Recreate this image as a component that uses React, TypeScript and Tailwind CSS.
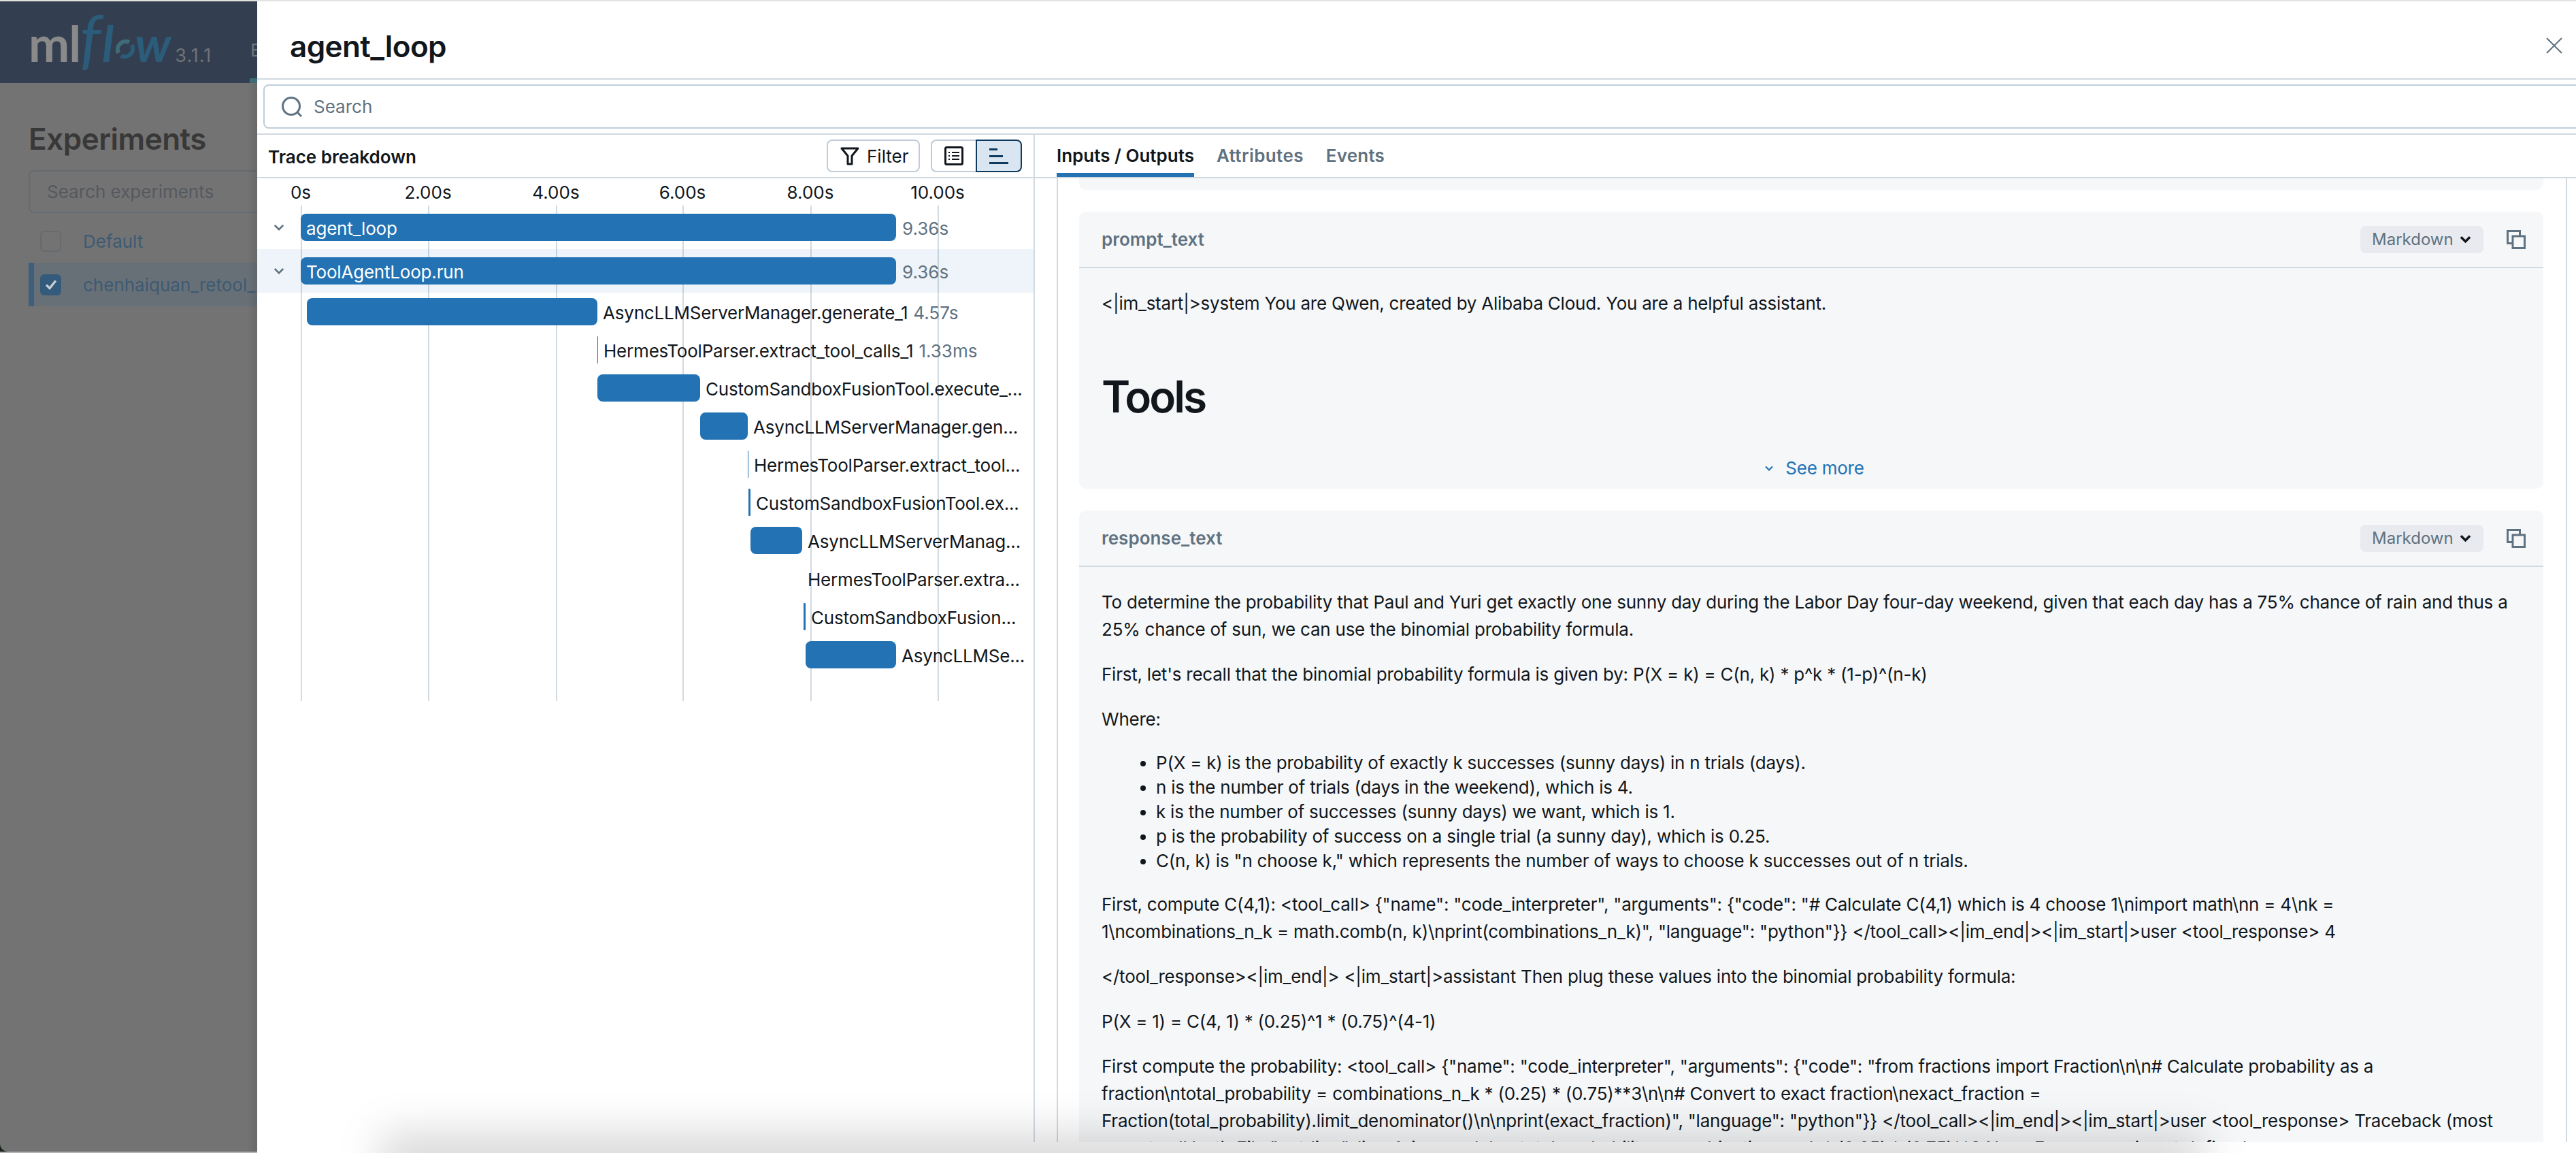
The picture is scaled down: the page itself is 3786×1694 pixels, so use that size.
import React from "react";

const inter = "font-['Inter','Liberation_Sans',sans-serif]";

type Row = { bar: number; w: number; name: string; dur?: string; inside?: boolean; tall?: boolean; chev?: boolean; hi?: boolean };

const ORIGIN = 378;
const rows: Row[] = [
  { bar: 442, w: 875, name: "agent_loop", dur: "9.36s", inside: true, tall: true, chev: true },
  { bar: 442, w: 875, name: "ToolAgentLoop.run", dur: "9.36s", inside: true, tall: true, chev: true, hi: true },
  { bar: 451, w: 427, name: "AsyncLLMServerManager.generate_1", dur: "4.57s" },
  { bar: 878, w: 1, name: "HermesToolParser.extract_tool_calls_1", dur: "1.33ms" },
  { bar: 878, w: 151, name: "CustomSandboxFusionTool.execute_..." },
  { bar: 1029, w: 70, name: "AsyncLLMServerManager.gen..." },
  { bar: 1099, w: 1, name: "HermesToolParser.extract_tool..." },
  { bar: 1100, w: 3, name: "CustomSandboxFusionTool.ex..." },
  { bar: 1103, w: 76, name: "AsyncLLMServerManag..." },
  { bar: 1179, w: 0, name: "HermesToolParser.extra..." },
  { bar: 1181, w: 3, name: "CustomSandboxFusion..." },
  { bar: 1184, w: 133, name: "AsyncLLMSe..." },
];

const ticks = [
  { x: 442, t: "0s" },
  { x: 629, t: "2.00s" },
  { x: 817, t: "4.00s" },
  { x: 1003, t: "6.00s" },
  { x: 1191, t: "8.00s" },
  { x: 1378, t: "10.00s" },
];

function Chevron({ className, sw = 2.2 }: { className?: string; sw?: number }) {
  return (
    <svg viewBox="0 0 16 16" className={className} fill="none" stroke="currentColor" strokeWidth={sw}>
      <path d="M3 5.5 8 10.5 13 5.5" />
    </svg>
  );
}

function Copy() {
  return (
    <svg viewBox="0 0 28 28" className="w-[28px] h-[28px] text-[#5f7281]" fill="none" stroke="currentColor" strokeWidth="3">
      <path d="M9 19.5H1.5V1.5H19.5V9" />
      <rect x="9" y="9" width="17.5" height="17.5" />
    </svg>
  );
}

function CardHeader({ label }: { label: string }) {
  return (
    <div className="h-[83px] border-b-2 border-[#d1d9e1] flex items-center pl-[33px] pr-[26px]">
      <span className="text-[#5f7281] text-[26px] font-semibold flex-1">{label}</span>
      <span className="h-[40px] w-[181px] bg-[#e8eaef] rounded-[8px] flex items-center pl-[17px] gap-[7px] text-[#5f7281] text-[24px]">
        Markdown
        <Chevron className="w-[21px] h-[21px] text-[#11171c]" sw={2.6} />
      </span>
      <span className="ml-[34px] flex"><Copy /></span>
    </div>
  );
}

function Lines({ lines }: { lines: string[] }) {
  return (
    <p className="mb-[26px] whitespace-nowrap">
      {lines.map((l, i) => (
        <React.Fragment key={i}>
          {l}
          {i < lines.length - 1 && <br />}
        </React.Fragment>
      ))}
    </p>
  );
}

function Logo() {
  return (
    <div className="flex items-baseline pl-[42px] pt-[4px] h-[120px] leading-none font-['Lato',sans-serif] whitespace-nowrap">
      <span className="text-[#8a8a8a] text-[72px] font-bold tracking-[-1px]">ml</span>
      <span className="text-[#2b5d7b] text-[96px] italic -ml-[1px] tracking-[-6px]">f</span>
      <span className="text-[#2b5d7b] text-[72px] italic font-bold ml-[8px]">l</span>
      <svg viewBox="0 0 30 30" className="w-[30px] h-[30px] ml-[2px] self-end mb-[35px]" fill="none" strokeWidth="6">
        <path d="M5 21A12 12 0 0 1 21 5" stroke="#3f6a78" />
        <path d="M25 9A12 12 0 0 1 9 25" stroke="#2b5d7b" />
      </svg>
      <span className="text-[#2b5d7b] text-[72px] italic font-bold -ml-[1px]">w</span>
      <span className={`${inter} text-[#6f7377] text-[27px] tracking-[1px] ml-[6px]`}>3.1.1</span>
    </div>
  );
}

function BehindPage() {
  return (
    <div className="w-[378px] shrink-0 bg-[#1c241c]">
      <div className="h-full bg-[#737373] rounded-bl-[12px] overflow-hidden relative flex flex-col">
        <div className="h-[120px] shrink-0 bg-[#333f50] relative">
          <Logo />
          <span className={`${inter} absolute left-[368px] top-[52px] text-[#6f7377] text-[26px]`}>E</span>
          <span className="absolute left-[367px] bottom-0 w-[11px] h-[7px] bg-[#3f6a78]" />
        </div>
        <div className={`${inter} pl-[42px] pt-[60px]`}>
          <div className="text-[#383838] text-[44px] font-semibold leading-[44px] tracking-[-0.5px]">Experiments</div>
          <div className="mt-[24px] w-[400px] h-[63px] border-2 border-[#666b70] rounded-[8px] flex items-center pl-[25px] text-[#55595e] text-[26px] whitespace-nowrap">
            Search experiments
          </div>
          <div className="mt-[17px] h-[48px] flex items-center whitespace-nowrap">
            <span className="ml-[17px] w-[31px] h-[31px] rounded-[6px] border-2 border-[#666b70]" />
            <span className="ml-[32px] text-[#3d5a73] text-[26px]">Default</span>
          </div>
          <div className="mt-[8px] h-[64px] w-[400px] bg-[#687077] border-l-[8px] border-[#3e5f7e] flex items-center whitespace-nowrap">
            <span className="ml-[9px] w-[31px] h-[31px] rounded-[6px] bg-[#345b7c] flex items-center justify-center">
              <svg viewBox="0 0 16 16" className="w-[22px] h-[22px]" fill="none" stroke="#c9d0d6" strokeWidth="2.4">
                <path d="M3 8.5 6.5 12 13 4" />
              </svg>
            </span>
            <span className="ml-[32px] text-[#3d5a73] text-[26px]">chenhaiquan_retool_</span>
          </div>
        </div>
        <div className="absolute top-[120px] bottom-0 right-0 w-[14px] bg-gradient-to-r from-transparent to-black/10" />
      </div>
    </div>
  );
}

function Timeline() {
  return (
    <div className="relative h-[768px]">
      <div className="relative h-[40px]">
        {ticks.map((t) => (
          <span key={t.t} className="absolute top-[1px] text-[26px] leading-[40px] text-[#11171c] -translate-x-1/2 whitespace-nowrap" style={{ left: t.x - ORIGIN }}>
            {t.t}
          </span>
        ))}
      </div>
      {ticks.map((t) => (
        <span key={t.x} className="absolute top-[40px] bottom-0 w-[2px] bg-[#d1d9e1]" style={{ left: t.x - ORIGIN }} />
      ))}
      <div className="relative">
        {rows.map((r, i) => (
          <div key={i} className={`relative flex items-center ${r.tall ? "h-[64px]" : "h-[56px]"} ${r.hi ? "bg-[#2272b4]/[0.08]" : ""}`}>
            {r.chev && (
              <span className="absolute left-[22px] text-[#5f7281] flex">
                <Chevron className="w-[20px] h-[20px]" />
              </span>
            )}
            <div
              className={`shrink-0 h-[40px] bg-[#2272b4] ${r.w > 4 ? "rounded-[8px]" : "rounded-[1px]"} flex items-center`}
              style={{ marginLeft: r.bar - ORIGIN, width: r.w }}
            >
              {r.inside && <span className="ml-[8px] mt-[3px] text-white text-[26px] tracking-[-0.2px] whitespace-nowrap">{r.name}</span>}
            </div>
            {!r.inside && <span className="ml-[8px] mt-[3px] text-[26px] tracking-[-0.2px] text-[#11171c] whitespace-nowrap">{r.name}</span>}
            {r.dur && <span className={`${r.inside ? "ml-[9px]" : "ml-[8px]"} mt-[3px] text-[26px] text-[#5f7281] whitespace-nowrap`}>{r.dur}</span>}
          </div>
        ))}
      </div>
    </div>
  );
}

function LeftPane() {
  return (
    <div className="w-[1143px] shrink-0 border-r-2 border-[#d1d9e1]">
      <div className="h-[64px] border-b-2 border-[#d1d9e1] flex items-center pl-[16px] pr-[17px]">
        <span className="flex-1 text-[26px] font-semibold text-[#11171c] pt-[3px]">Trace breakdown</span>
        <button className="h-[48px] w-[137px] border-2 border-[#c0cdd8] rounded-[8px] flex items-center pl-[18px] gap-[11px] text-[26px] text-[#11171c]">
          <svg viewBox="0 0 28 28" className="w-[28px] h-[28px]" fill="none" stroke="#11171c" strokeWidth="3" strokeLinejoin="round">
            <path d="M2 3H26L17 14V26H11V14Z" />
          </svg>
          Filter
        </button>
        <div className="ml-[16px] flex h-[48px]">
          <span className="w-[66px] border-2 border-r-0 border-[#c0cdd8] rounded-l-[8px] flex items-center justify-center">
            <svg viewBox="0 0 28 28" className="w-[28px] h-[28px]">
              <rect x="1.5" y="1.5" width="25" height="25" rx="2" fill="none" stroke="#11171c" strokeWidth="3" />
              <path d="M6 8h2v2H6zM6 13h2v2H6zM6 18h2v2H6z" fill="#11171c" />
              <path d="M11 8h11v2H11zM11 13h11v2H11zM11 18h11v2H11z" fill="#11171c" />
            </svg>
          </span>
          <span className="w-[68px] border-2 border-[#0e3a5f] bg-[#d9e5f0] rounded-r-[8px] flex items-center justify-center">
            <svg viewBox="0 0 28 28" className="w-[28px] h-[28px]" fill="#0e3a5f">
              <rect x="0" y="3" width="12" height="3" />
              <rect x="0" y="13" width="20" height="3" />
              <rect x="0" y="23" width="28" height="3" />
            </svg>
          </span>
        </div>
      </div>
      <Timeline />
    </div>
  );
}

function RightPane() {
  return (
    <div className="flex-1 min-w-0 flex flex-col">
      <div className="h-[64px] shrink-0 border-b-2 border-[#d1d9e1] flex pl-[32px] gap-[33px] text-[26px] font-semibold text-[#5f7281]">
        <span className="h-[62px] border-b-[6px] border-[#2272b4] text-[#11171c] pt-[14px] leading-[34px]">Inputs / Outputs</span>
        <span className="pt-[14px] leading-[34px] tracking-[0.4px]">Attributes</span>
        <span className="pt-[14px] leading-[34px] tracking-[0.2px]">Events</span>
      </div>
      <div className="flex-1 min-h-0 overflow-hidden ml-[32px] mr-[13px] border-x-2 border-[#d1d9e1] pl-[31px] pr-[33px]">
        <div className="h-[17px] bg-[#f6f7f9] rounded-b-[10px]" />
        <div className="mt-[32px] h-[407px] bg-[#f6f7f9] rounded-[10px] overflow-hidden">
          <CardHeader label="prompt_text" />
          <div className="px-[33px] pt-[32px] text-[26px] leading-[40px] tracking-[-0.23px] text-[#11171c]">
            <p className="whitespace-nowrap">{"<|im_start|>system You are Qwen, created by Alibaba Cloud. You are a helpful assistant."}</p>
            <h1 className="mt-[78px] text-[64px] leading-[78px] font-semibold tracking-[-3px]">Tools</h1>
            <div className="mt-[46px] ml-[8px] flex items-center justify-center gap-[16px] text-[#2272b4]">
              <Chevron className="w-[16px] h-[16px]" />
              <span>See more</span>
            </div>
          </div>
        </div>
        <div className="mt-[32px] bg-[#f6f7f9] rounded-t-[10px] h-[1000px]">
          <CardHeader label="response_text" />
          <div className="px-[33px] pt-[32px] text-[26px] leading-[40px] tracking-[-0.23px] text-[#11171c]">
            <Lines lines={[
              "To determine the probability that Paul and Yuri get exactly one sunny day during the Labor Day four-day weekend, given that each day has a 75% chance of rain and thus a",
              "25% chance of sun, we can use the binomial probability formula.",
            ]} />
            <Lines lines={["First, let's recall that the binomial probability formula is given by: P(X = k) = C(n, k) * p^k * (1-p)^(n-k)"]} />
            <Lines lines={["Where:"]} />
            <ul className="list-disc pl-[80px] mb-[26px] leading-[36px] whitespace-nowrap">
              <li>P(X = k) is the probability of exactly k successes (sunny days) in n trials (days).</li>
              <li>n is the number of trials (days in the weekend), which is 4.</li>
              <li>k is the number of successes (sunny days) we want, which is 1.</li>
              <li>p is the probability of success on a single trial (a sunny day), which is 0.25.</li>
              <li>{'C(n, k) is "n choose k," which represents the number of ways to choose k successes out of n trials.'}</li>
            </ul>
            <Lines lines={[
              'First, compute C(4,1): <tool_call> {"name": "code_interpreter", "arguments": {"code": "# Calculate C(4,1) which is 4 choose 1\\nimport math\\nn = 4\\nk =',
              '1\\ncombinations_n_k = math.comb(n, k)\\nprint(combinations_n_k)", "language": "python"}} </tool_call><|im_end|><|im_start|>user <tool_response> 4',
            ]} />
            <Lines lines={["</tool_response><|im_end|> <|im_start|>assistant Then plug these values into the binomial probability formula:"]} />
            <Lines lines={["P(X = 1) = C(4, 1) * (0.25)^1 * (0.75)^(4-1)"]} />
            <Lines lines={[
              'First compute the probability: <tool_call> {"name": "code_interpreter", "arguments": {"code": "from fractions import Fraction\\n\\n# Calculate probability as a',
              'fraction\\ntotal_probability = combinations_n_k * (0.25) * (0.75)**3\\n\\n# Convert to exact fraction\\nexact_fraction =',
              'Fraction(total_probability).limit_denominator()\\n\\nprint(exact_fraction)", "language": "python"}} </tool_call><|im_end|><|im_start|>user <tool_response> Traceback (most',
              'recent call last): File "<stdin>", line 4, in <module> total_probability = combinations_n_k * (0.25) * (0.75)**3 NameError: name is not defined',
            ]} />
          </div>
        </div>
      </div>
    </div>
  );
}

function Drawer() {
  return (
    <div className={`${inter} flex-1 min-w-0 bg-white overflow-hidden relative flex flex-col`}>
      <div className="h-[1676px] flex flex-col shrink-0">
        <div className="h-[113px] shrink-0 flex items-center pl-[48px] pr-[20px]">
          <span className="flex-1 text-[44px] font-semibold tracking-[-0.6px] text-[#11171c] pt-[19px] leading-[56px]">agent_loop</span>
          <svg viewBox="0 0 24 24" className="w-[24px] h-[24px] mt-[16px]" fill="none" stroke="#5f7281" strokeWidth="2">
            <path d="M1 1 23 23M23 1 1 23" />
          </svg>
        </div>
        <div className="h-[2px] shrink-0 bg-[#d1d9e1]" />
        <div className="h-[79px] shrink-0 pt-[7px] pl-[9px]">
          <div className="w-[3500px] h-[65px] border-2 border-[#c0cdd8] rounded-[8px] flex items-center pl-[25px] gap-[17px] text-[26px] text-[#5f7281]">
            <svg viewBox="0 0 30 30" className="w-[30px] h-[30px]" fill="none" stroke="#5f7281" strokeWidth="3">
              <circle cx="14" cy="14" r="12.5" />
              <path d="M23 23 29 29" />
            </svg>
            Search
          </div>
        </div>
        <div className="h-[2px] shrink-0 bg-[#d1d9e1]" />
        <div className="flex-1 min-h-0 flex">
          <LeftPane />
          <RightPane />
        </div>
      </div>
    </div>
  );
}

export default function App() {
  return (
    <div className="w-[3786px] h-[1694px] bg-[#e2e2e2] overflow-hidden relative flex flex-col">
      <div className="h-[2px] shrink-0 bg-[#e2e2e2]" />
      <div className="h-[1690px] shrink-0 flex">
        <BehindPage />
        <Drawer />
      </div>
      <div className="h-[2px] shrink-0 flex">
        <div className="w-[378px] bg-[#b5b5b5]" />
        <div className="flex-1 bg-white" />
      </div>
      <div className="absolute left-[560px] w-[2680px] bottom-[-50px] h-[80px] bg-black/15 blur-[30px] pointer-events-none" />
    </div>
  );
}
